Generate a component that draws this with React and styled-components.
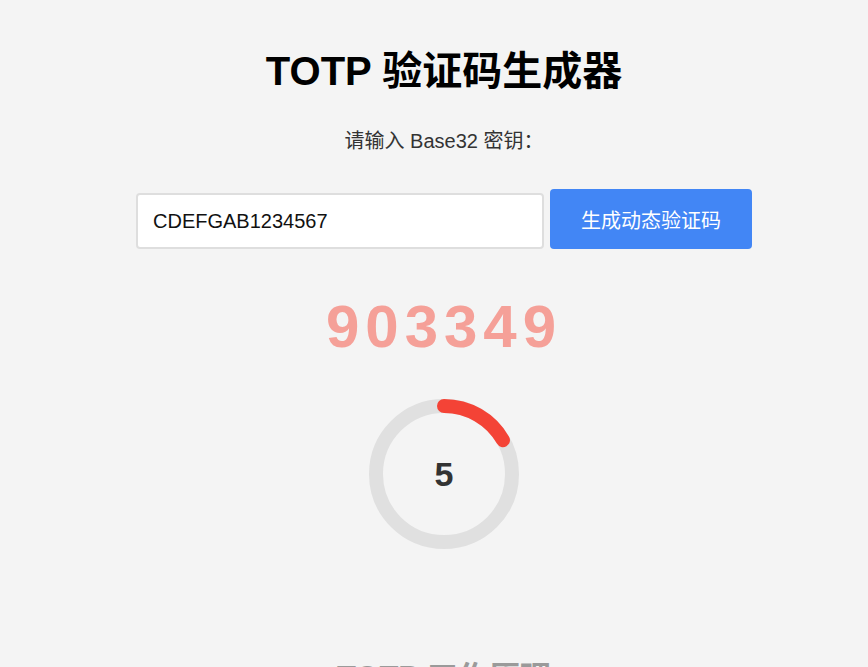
import React, { useState } from "react";
import styled, { createGlobalStyle } from "styled-components";

const GlobalStyle = createGlobalStyle`
  html, body {
    margin: 0;
    padding: 0;
    background: #f4f4f4;
  }
  body {
    font-family: "Liberation Sans", Arial, "Noto Sans CJK SC", sans-serif;
    line-height: 1.2;
    overflow: hidden;
  }
`;

const PERIOD = 30;
const RADIUS = 68;
const CIRC = 2 * Math.PI * RADIUS;

const App = () => {
  const [secret, setSecret] = useState("CDEFGAB1234567");
  const remaining = 5;
  const dash = (remaining / PERIOD) * CIRC;

  return (
    <>
      <GlobalStyle />
      <Page>
        <Title>TOTP 验证码生成器</Title>
        <Label htmlFor="secret">请输入 Base32 密钥：</Label>
        <InputRow>
          <SecretInput
            id="secret"
            value={secret}
            onChange={(e) => setSecret(e.target.value)}
          />
          <GenerateButton>生成动态验证码</GenerateButton>
        </InputRow>
        <Code>903349</Code>
        <Timer>
          <svg width="150" height="150" viewBox="0 0 150 150">
            <circle
              cx="75"
              cy="75"
              r={RADIUS}
              fill="none"
              stroke="#e0e0e0"
              strokeWidth="14"
            />
            <circle
              cx="75"
              cy="75"
              r={RADIUS}
              fill="none"
              stroke="#f44336"
              strokeWidth="14"
              strokeLinecap="round"
              strokeDasharray={`${dash} ${CIRC}`}
              transform="rotate(-90 75 75)"
            />
          </svg>
          <Seconds>{remaining}</Seconds>
        </Timer>
        <SectionTitle>TOTP 工作原理</SectionTitle>
      </Page>
    </>
  );
};

export default App;

const Page = styled.main`
  display: flex;
  flex-direction: column;
  align-items: center;
  padding: 47px 0 0 20px;
`;

const Title = styled.h1`
  margin: 0;
  font-size: 40px;
  font-weight: bold;
  color: #000;
`;

const Label = styled.label`
  margin-top: 34px;
  font-size: 20px;
  color: #333;
`;

const InputRow = styled.div`
  margin-top: 36px;
  display: flex;
  align-items: flex-end;
  gap: 6px;
`;

const SecretInput = styled.input`
  box-sizing: border-box;
  width: 408px;
  height: 56px;
  padding: 0 15px;
  border: 2px solid #dedede;
  border-radius: 4px;
  background: #fff;
  font-family: inherit;
  font-size: 20px;
  color: #111;
  outline: none;
`;

const GenerateButton = styled.button`
  width: 202px;
  height: 60px;
  border: none;
  border-radius: 4px;
  background: #4286f5;
  color: #fff;
  font-family: inherit;
  font-size: 20px;
  cursor: pointer;
`;

const Code = styled.div`
  margin-top: 42px;
  font-size: 60px;
  font-weight: bold;
  letter-spacing: 6px;
  color: #f5a098;
`;

const Timer = styled.div`
  margin-top: 36px;
  display: grid;
  place-items: center;

  & > * {
    grid-area: 1 / 1;
  }
`;

const Seconds = styled.span`
  font-size: 34px;
  font-weight: bold;
  color: #333;
`;

const SectionTitle = styled.h2`
  margin: 110px 0 0;
  font-size: 31px;
  font-weight: bold;
  color: #9a9a9a;
`;
